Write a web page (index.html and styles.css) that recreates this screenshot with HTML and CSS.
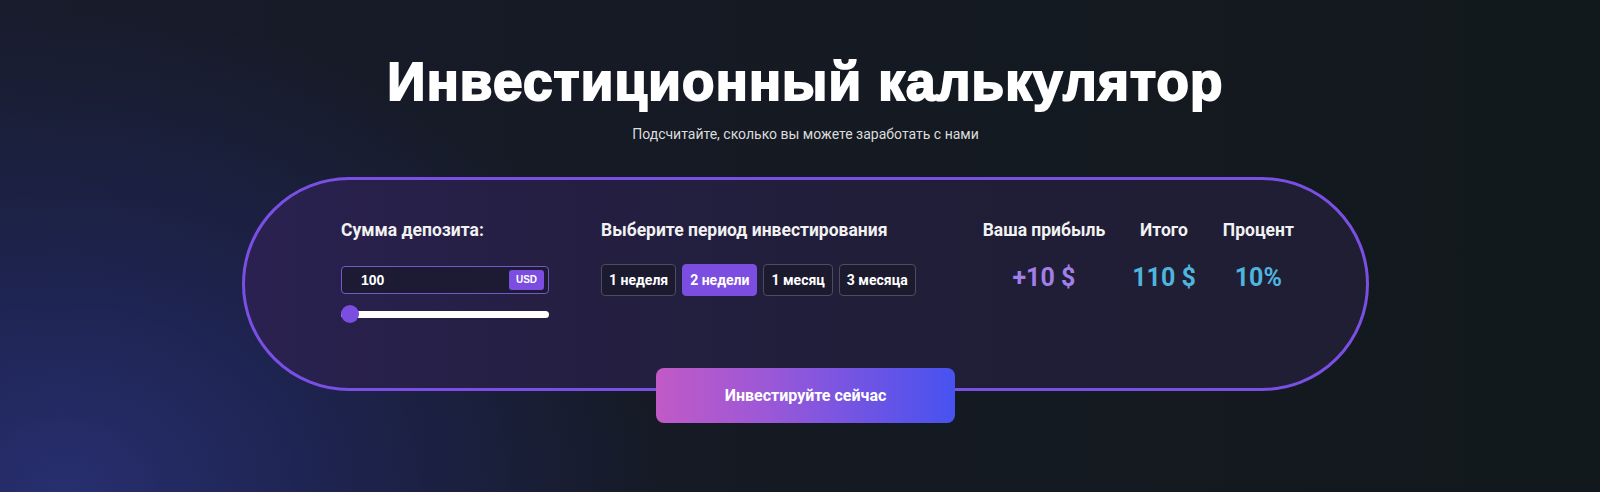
FILE: index.html
```html
<!DOCTYPE html>
<html lang="ru">
<head>
    <meta charset="UTF-8">
    <meta name="viewport" content="width=device-width, initial-scale=1.0">
    <title>Инвестиционный калькулятор</title>
    <link rel="stylesheet" href="styles.css">
</head>
<body>

<div class="page">
    <h1 class="title">Инвестиционный калькулятор</h1>
    <p class="subtitle">Подсчитайте, сколько вы можете заработать с нами</p>

    <div class="calculator">
        <div class="col col-deposit">
            <div class="label">Сумма депозита:</div>
            <div class="amount">
                <input type="text" class="amount-input" value="100">
                <span class="currency">USD</span>
            </div>
            <input type="range" class="slider" min="100" max="10000" value="100">
        </div>

        <div class="col col-period">
            <div class="label">Выберите период инвестирования</div>
            <div class="periods">
                <button class="period">1 неделя</button>
                <button class="period active">2 недели</button>
                <button class="period">1 месяц</button>
                <button class="period">3 месяца</button>
            </div>
        </div>

        <div class="col col-results">
            <div class="result">
                <div class="label">Ваша прибыль</div>
                <div class="value profit">+10 $</div>
            </div>
            <div class="result">
                <div class="label">Итого</div>
                <div class="value">110 $</div>
            </div>
            <div class="result">
                <div class="label">Процент</div>
                <div class="value">10%</div>
            </div>
        </div>
    </div>

    <button class="invest-btn">Инвестируйте сейчас</button>
</div>

</body>
</html>
```

FILE: styles.css
```css
html, body {
    height: 100%;
}
body {
    margin: 0;
    font-family: Roboto, "Liberation Sans", Arial, sans-serif;
    color: #fff;
    background:
        radial-gradient(ellipse 760px 600px at 4% 100%, rgba(40, 48, 115, 0.95) 0%, rgba(32, 38, 92, 0.75) 35%, rgba(24, 28, 60, 0) 80%),
        linear-gradient(90deg, #181c2c 0%, #151a24 40%, #12191c 100%);
    overflow: hidden;
}
.page {
    display: flex;
    flex-direction: column;
    align-items: center;
    padding-left: 11px;
}
.title {
    margin: 52px 0 0;
    font-family: "Liberation Sans", Arial, sans-serif;
    font-size: 53px;
    line-height: 60px;
    font-weight: 700;
    -webkit-text-stroke: 2px #fff;
    letter-spacing: 1.2px;
}
.subtitle {
    margin: 14px 0 0;
    font-size: 14px;
    line-height: 17px;
    color: #dcdcdc;
}

/* calculator card */
.calculator {
    box-sizing: border-box;
    width: 1127px;
    height: 214px;
    margin-top: 34px;
    padding: 40px 0 0 96px;
    display: flex;
    align-items: flex-start;
    border: 3px solid #7a4fe3;
    border-radius: 107px;
    background: linear-gradient(90deg, #2a2150 0%, #241f42 30%, #201e38 60%, #1f1e33 100%);
}
.label {
    font-size: 17.5px;
    line-height: 20px;
    font-weight: 700;
    color: #f2f2f2;
    white-space: nowrap;
}
.col-deposit {
    width: 208px;
}
.col-period {
    margin-left: 52px;
}
.col-results {
    margin-left: 67px;
    display: flex;
    gap: 27px;
}

.amount {
    box-sizing: border-box;
    height: 28px;
    margin-top: 26px;
    display: flex;
    align-items: center;
    justify-content: space-between;
    padding: 0 4px 0 19px;
    border: 1px solid #7258c9;
    border-radius: 4px;
    background: #1d1a33;
}
.amount-input {
    width: 100px;
    padding: 0;
    border: none;
    outline: none;
    background: transparent;
    color: #fff;
    font-family: "Liberation Sans", Arial, sans-serif;
    font-size: 14px;
    font-weight: 700;
}
.currency {
    width: 35px;
    height: 20px;
    line-height: 20px;
    text-align: center;
    border-radius: 3px;
    background: #7b4de0;
    font-family: "Liberation Sans", Arial, sans-serif;
    font-size: 10px;
    font-weight: 700;
}

.slider {
    -webkit-appearance: none;
    appearance: none;
    display: block;
    width: 208px;
    height: 18px;
    margin: 11px 0 0;
    background: transparent;
}
.slider::-webkit-slider-runnable-track {
    height: 7px;
    border-radius: 4px;
    background: #fff;
}
.slider::-webkit-slider-thumb {
    -webkit-appearance: none;
    width: 18px;
    height: 18px;
    margin-top: -5.5px;
    border-radius: 50%;
    background: #7b4de0;
    border: none;
}

.periods {
    display: flex;
    gap: 6px;
    margin-top: 24px;
}
.period {
    height: 32px;
    padding: 0 7px;
    border: 1px solid #4d4b5e;
    border-radius: 4px;
    background: #1c1a2e;
    color: #fff;
    font-family: Roboto, Arial, sans-serif;
    font-size: 14px;
    font-weight: 700;
    cursor: pointer;
}
.period.active {
    background: #7b4de0;
    border-color: #7b4de0;
}

.result {
    display: flex;
    flex-direction: column;
    align-items: center;
}
.value {
    margin-top: 23px;
    font-size: 25px;
    line-height: 29px;
    font-weight: 700;
    color: #4fb4de;
}
.value.profit {
    color: #a27fe8;
}

.invest-btn {
    width: 299px;
    height: 55px;
    margin-top: -23px;
    border: none;
    border-radius: 8px;
    background: linear-gradient(90deg, #c15ac6 0%, #9e58d6 35%, #6f54e4 70%, #4752f0 100%);
    color: #fff;
    font-family: Roboto, Arial, sans-serif;
    font-size: 16px;
    font-weight: 700;
    cursor: pointer;
}
```
